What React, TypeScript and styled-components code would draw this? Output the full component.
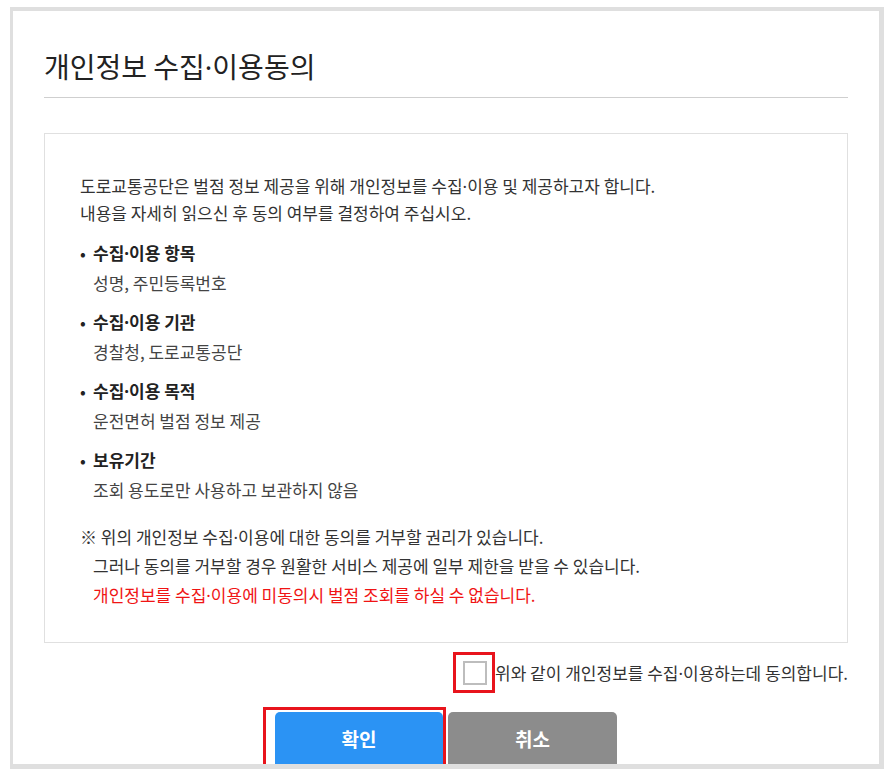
import * as React from "react"
import styled, { createGlobalStyle } from "styled-components"

const GlobalStyle = createGlobalStyle`
  html, body {
    margin: 0;
    padding: 0;
    background: #ffffff;
  }
  body {
    font-family: "Noto Sans CJK KR", "Noto Sans", sans-serif;
    color: #333;
  }
`

const Frame = styled.div`
  box-sizing: border-box;
  width: 874px;
  height: 762px;
  margin: 7px 0 0 10px;
  border-style: solid;
  border-color: #dfdfdf;
  border-width: 4px 5px 5px 3px;
  background: #fff;
  overflow: hidden;
`

const Inner = styled.div`
  padding: 0 31px;
`

// narrow latin middle dot, the CJK one is full width
const Dot = styled.span`
  font-family: "Noto Sans", "Liberation Sans", sans-serif;
  line-height: 1;
`

const Title = styled.h1`
  margin: 0;
  padding: 35px 0 11px;
  font-size: 28px;
  line-height: 40px;
  font-weight: 400;
  color: #222;
  border-bottom: 1px solid #cfcfcf;
`

const ContentBox = styled.div`
  margin-top: 35px;
  border: 1px solid #e0e0e0;
  padding: 38px 35px 33px;
  font-size: 17px;
`

const Intro = styled.p`
  margin: 0;
  line-height: 27px;
  color: #333;
`

const List = styled.ul`
  list-style: none;
  margin: 12px 0 0;
  padding: 0;
`

const Item = styled.li`
  line-height: 30px;
  & + & {
    margin-top: 9px;
  }
`

const ItemTitle = styled.div`
  font-weight: 700;
  color: #222;
  &::before {
    content: "•";
    display: inline-block;
    width: 13px;
    font-weight: 400;
  }
`

const ItemDesc = styled.div`
  padding-left: 13px;
  color: #444;
`

const NoticeBlock = styled.div`
  margin-top: 17px;
  & > p:first-child {
    text-indent: -13px;
  }
`

const Notice = styled.p<{ $warn?: boolean }>`
  margin: 0;
  padding-left: 13px;
  line-height: 29px;
  color: ${(p) => (p.$warn ? "#f01414" : "#333")};
`

const AgreeRow = styled.label`
  display: flex;
  justify-content: flex-end;
  align-items: center;
  margin-top: 9px;
  font-size: 17px;
  color: #333;
`

const AgreeText = styled.span`
  line-height: 24px;
`

const CheckMark = styled.span`
  box-sizing: border-box;
  display: flex;
  width: 42px;
  height: 41px;
  padding: 6px 5px 5px 7px;
  border: 3px solid #e8141c;
`

const CheckBox = styled.span`
  box-sizing: border-box;
  display: block;
  width: 24px;
  height: 24px;
  border: 2px solid #bdbdbd;
  background: #fff;
`

const ButtonRow = styled.div`
  display: flex;
  justify-content: center;
  gap: 5px;
  margin-top: 19px;
`

const ButtonSlot = styled.div`
  position: relative;
`

const Highlight = styled.span`
  position: absolute;
  top: -5px;
  left: -12px;
  right: -3px;
  bottom: -1px;
  border: 3px solid #e8141c;
  pointer-events: none;
`

const Button = styled.button<{ $tone: "primary" | "neutral" }>`
  display: block;
  width: ${(p) => (p.$tone === "primary" ? 168 : 169)}px;
  height: 56px;
  padding: 0 0 4px;
  border: 0;
  border-radius: 5px;
  background: ${(p) => (p.$tone === "primary" ? "#2b93f4" : "#8c8c8c")};
  color: #fff;
  font-family: inherit;
  font-size: 19px;
  font-weight: 700;
  cursor: pointer;
`

const items = [
  { title: "수집·이용 항목", desc: "성명, 주민등록번호" },
  { title: "수집·이용 기관", desc: "경찰청, 도로교통공단" },
  { title: "수집·이용 목적", desc: "운전면허 벌점 정보 제공" },
  { title: "보유기간", desc: "조회 용도로만 사용하고 보관하지 않음" },
]

function withDots(text: string) {
  const parts = text.split("·")
  return parts.map((part, i) => (
    <React.Fragment key={i}>
      {i > 0 && <Dot>·</Dot>}
      {part}
    </React.Fragment>
  ))
}

export default function App() {
  return (
    <>
      <GlobalStyle />
      <Frame>
        <Inner>
          <Title>{withDots("개인정보 수집·이용동의")}</Title>
          <ContentBox>
            <Intro>{withDots("도로교통공단은 벌점 정보 제공을 위해 개인정보를 수집·이용 및 제공하고자 합니다.")}</Intro>
            <Intro>내용을 자세히 읽으신 후 동의 여부를 결정하여 주십시오.</Intro>
            <List>
              {items.map((it) => (
                <Item key={it.title}>
                  <ItemTitle>{withDots(it.title)}</ItemTitle>
                  <ItemDesc>{it.desc}</ItemDesc>
                </Item>
              ))}
            </List>
            <NoticeBlock>
              <Notice>{withDots("※ 위의 개인정보 수집·이용에 대한 동의를 거부할 권리가 있습니다.")}</Notice>
              <Notice>그러나 동의를 거부할 경우 원활한 서비스 제공에 일부 제한을 받을 수 있습니다.</Notice>
              <Notice $warn>{withDots("개인정보를 수집·이용에 미동의시 벌점 조회를 하실 수 없습니다.")}</Notice>
            </NoticeBlock>
          </ContentBox>
          <AgreeRow>
            <CheckMark>
              <CheckBox />
            </CheckMark>
            <AgreeText>{withDots("위와 같이 개인정보를 수집·이용하는데 동의합니다.")}</AgreeText>
          </AgreeRow>
          <ButtonRow>
            <ButtonSlot>
              <Button $tone="primary">확인</Button>
              <Highlight />
            </ButtonSlot>
            <ButtonSlot>
              <Button $tone="neutral">취소</Button>
            </ButtonSlot>
          </ButtonRow>
        </Inner>
      </Frame>
    </>
  )
}
